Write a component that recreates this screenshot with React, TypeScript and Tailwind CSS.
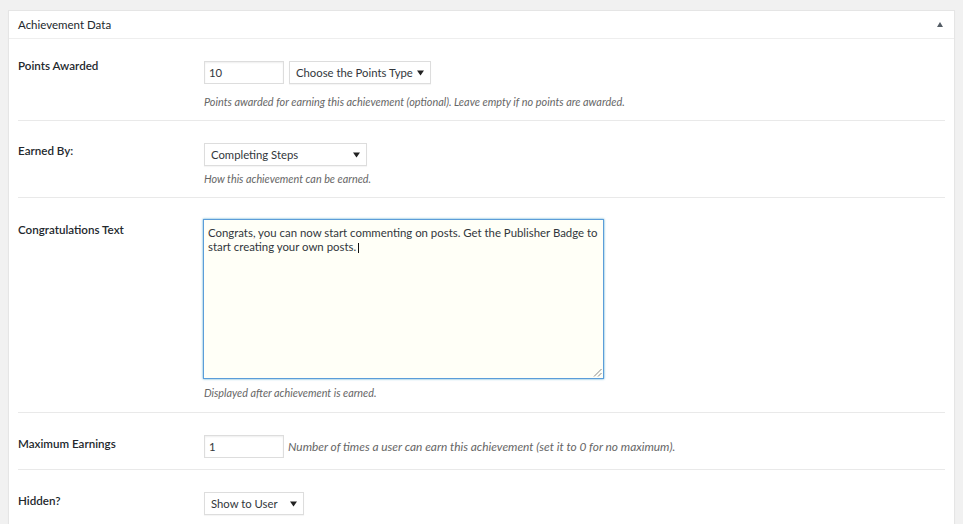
import React from "react";

const font = { fontFamily: 'Lato, "Open Sans", sans-serif' };

function Arrow() {
  return (
    <svg width="7" height="6" viewBox="0 0 7 6" className="shrink-0">
      <path d="M0 0.5 L7 0.5 L3.5 5.5 Z" fill="#222" />
    </svg>
  );
}

function Select({ text, w, h = 23 }: { text: string; w: number; h?: number }) {
  return (
    <div
      className="flex items-center justify-between border border-[#dddddd] bg-white pl-[6px] pr-[6px] text-[11.3px] text-[#32373c] shadow-[0_1px_1px_rgba(0,0,0,0.04)]"
      style={{ width: w, height: h }}
    >
      <span className="whitespace-nowrap leading-[16px]">{text}</span>
      <Arrow />
    </div>
  );
}

function Input({ value }: { value: string }) {
  return (
    <div className="flex h-[23px] w-[80px] items-center border border-[#dddddd] bg-white pl-[4px] text-[11.3px] text-[#32373c] shadow-[inset_0_1px_2px_rgba(0,0,0,0.07)]">
      <span className="leading-[16px]">{value}</span>
    </div>
  );
}

function Label({ text, pt }: { text: string; pt: string }) {
  return (
    <div className={`w-[186px] shrink-0 ${pt}`}>
      <div className="text-[11.6px] font-semibold leading-[16px] text-[#23282d]">{text}</div>
    </div>
  );
}

export default function App() {
  return (
    <div className="h-screen w-full overflow-hidden bg-[#f1f1f1] pt-[10px] pl-[8px]" style={font}>
      <div className="w-[947px] border border-[#e5e5e5] bg-white shadow-[0_1px_1px_rgba(0,0,0,0.04)]">
        {/* Header */}
        <div className="flex h-[28px] items-center justify-between border-b border-[#eeeeee] pl-[9px] pr-[11px]">
          <span className="pt-[1px] text-[11.5px] leading-[16px] text-[#23282d]">Achievement Data</span>
          <svg width="6" height="5" viewBox="0 0 6 5">
            <path d="M0 5 L6 5 L3 0 Z" fill="#555d66" />
          </svg>
        </div>

        <div className="px-[9px]">
          {/* Row 1 */}
          <div className="flex border-b border-[#e9e9e9] pt-[22px] pb-[10px]">
            <Label text="Points Awarded" pt="-mt-[3px]" />
            <div className="flex flex-col">
              <div className="flex gap-[5px]">
                <div className="h-[22px]">
                  <Input value="10" />
                </div>
                <Select text="Choose the Points Type" w={142} h={23} />
              </div>
              <div className="mt-[10px] text-[10.9px] italic leading-[16px] text-[#666666]">
                Points awarded for earning this achievement (optional). Leave empty if no points are awarded.
              </div>
            </div>
          </div>

          {/* Row 2 */}
          <div className="flex border-b border-[#e9e9e9] pt-[22px] pb-[10px]">
            <Label text="Earned By:" pt="pt-0" />
            <div className="flex flex-col">
              <Select text="Completing Steps" w={163} h={23} />
              <div className="mt-[5px] text-[10.8px] italic leading-[16px] text-[#666666]">
                How this achievement can be earned.
              </div>
            </div>
          </div>

          {/* Row 3 */}
          <div className="flex border-b border-[#e9e9e9] pt-[21px] pb-[11px]">
            <Label text="Congratulations Text" pt="pt-[3px]" />
            <div className="-ml-[1px] flex flex-col">
              <div className="relative h-[160px] w-[401px] border border-[#5b9dd9] bg-[#fffff7] px-[4px] pt-[6px] text-[11.4px] leading-[14px] text-[#32373c] shadow-[0_0_2px_rgba(30,140,190,0.8)]">
                Congrats, you can now start commenting on posts. Get the Publisher Badge to start creating your own posts.
                <span className="ml-[2px] inline-block h-[10px] w-[1px] align-[-2px] bg-[#111]" />
                <svg className="absolute right-[1px] bottom-[1px]" width="9" height="9" viewBox="0 0 9 9">
                  <path d="M8.5 1 L1 8.5 M8.5 5 L5 8.5" stroke="#888" strokeWidth="1" />
                </svg>
              </div>
              <div className="ml-[1px] mt-[6px] text-[10.8px] italic leading-[16px] text-[#666666]">
                Displayed after achievement is earned.
              </div>
            </div>
          </div>

          {/* Row 4 */}
          <div className="flex border-b border-[#e9e9e9] pt-[22px] pb-[11px]">
            <Label text="Maximum Earnings" pt="pt-[1px]" />
            <div className="flex items-center gap-[4px]">
              <Input value="1" />
              <span className="text-[11.9px] italic leading-[16px] text-[#666666]">
                Number of times a user can earn this achievement (set it to 0 for no maximum).
              </span>
            </div>
          </div>

          {/* Row 5 */}
          <div className="flex pt-[22px] pb-[20px]">
            <Label text="Hidden?" pt="pt-[1px]" />
            <Select text="Show to User" w={100} h={23} />
          </div>
        </div>
      </div>
    </div>
  );
}
